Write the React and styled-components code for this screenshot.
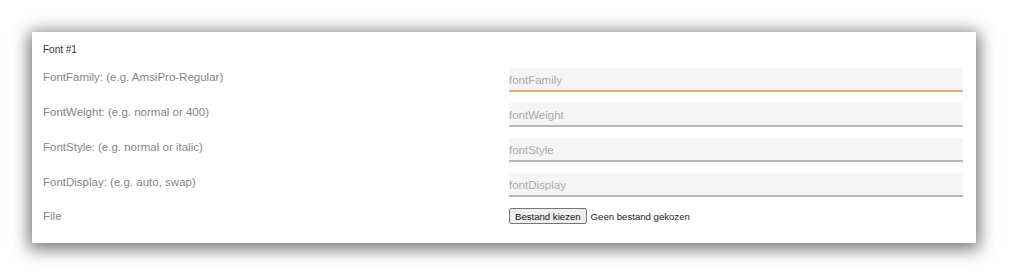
import React from "react";
import styled, { createGlobalStyle } from "styled-components";

const GlobalStyle = createGlobalStyle`
  html, body {
    margin: 0;
    padding: 0;
    background: #ffffff;
  }
  body {
    font-family: "Liberation Sans", Arial, sans-serif;
  }
`;

const Page = styled.div`
  padding: 32px 0 0 32px;
  width: 1009px;
  height: 277px;
  box-sizing: border-box;
`;

const Card = styled.section`
  width: 944px;
  height: 211px;
  box-sizing: border-box;
  background: #ffffff;
  padding: 12px 13px 0 11px;
  box-shadow: 0 3px 16px 3px rgba(0, 0, 0, 0.55);
`;

const Title = styled.h3`
  margin: 0 0 12px 0;
  font-size: 10px;
  line-height: 12px;
  font-weight: normal;
  color: #333333;
`;

const Form = styled.div`
  display: grid;
  grid-template-columns: 466px 454px;
  row-gap: 11px;
  align-items: start;
`;

const Label = styled.label`
  display: block;
  padding-top: ${(p) => p.$offset ?? 1}px;
  font-size: 11.5px;
  line-height: 16px;
  color: #858585;
`;

const Input = styled.input`
  display: block;
  width: 100%;
  height: 24px;
  box-sizing: border-box;
  margin: 0;
  padding: 2px 0 0 0;
  border: none;
  border-bottom: 2px solid ${(p) => (p.$active ? "#f2a074" : "#b8b8b8")};
  background: #f5f5f5;
  font-family: "Liberation Sans", Arial, sans-serif;
  font-size: 11.5px;
  color: #333;
  outline: none;
  caret-color: #444;
  &::placeholder {
    color: #ababab;
  }
`;

const FileField = styled.div`
  display: flex;
  align-items: center;
  height: 16px;
`;

const FileButton = styled.span`
  display: inline-flex;
  align-items: center;
  height: 16px;
  box-sizing: border-box;
  padding: 0 5px;
  border: 1px solid #767676;
  border-radius: 2px;
  background: #efefef;
  font-size: 9.6px;
  color: #111;
  white-space: nowrap;
`;

const FileStatus = styled.span`
  margin-left: 4px;
  font-size: 9.6px;
  color: #222;
  white-space: nowrap;
`;

const fields = [
  { label: "FontFamily: (e.g. AmsiPro-Regular)", name: "fontFamily", active: true },
  { label: "FontWeight: (e.g. normal or 400)", name: "fontWeight" },
  { label: "FontStyle: (e.g. normal or italic)", name: "fontStyle" },
  { label: "FontDisplay: (e.g. auto, swap)", name: "fontDisplay" },
];

export default function App() {
  return (
    <>
      <GlobalStyle />
      <Page>
        <Card>
          <Title>Font #1</Title>
          <Form>
            {fields.map((f) => (
              <React.Fragment key={f.name}>
                <Label htmlFor={f.name}>{f.label}</Label>
                <Input
                  id={f.name}
                  placeholder={f.name}
                  $active={f.active}
                  autoFocus={f.active}
                />
              </React.Fragment>
            ))}
            <Label $offset={0}>File</Label>
            <FileField>
              <FileButton>Bestand kiezen</FileButton>
              <FileStatus>Geen bestand gekozen</FileStatus>
            </FileField>
          </Form>
        </Card>
      </Page>
    </>
  );
}
